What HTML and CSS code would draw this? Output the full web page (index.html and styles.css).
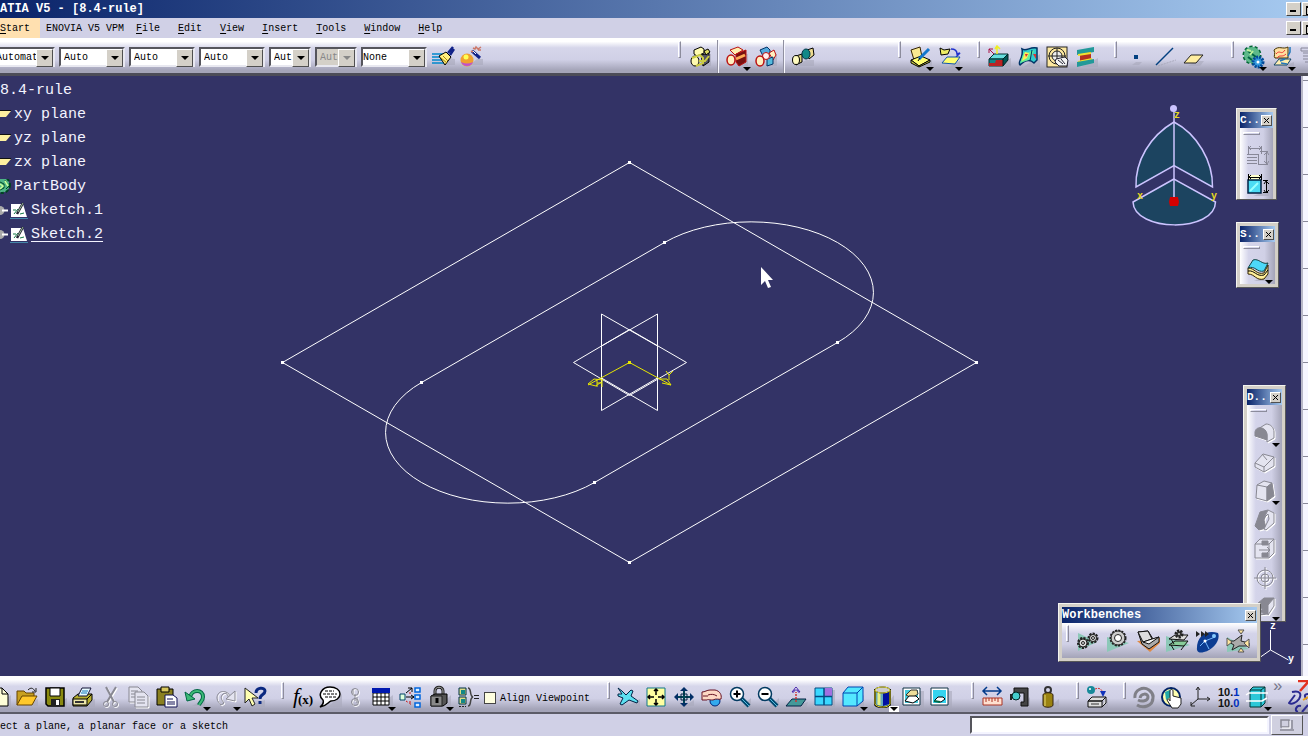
FILE: index.html
```html
<!DOCTYPE html>
<html lang="en">
<head>
<meta charset="utf-8">
<title>CATIA V5 - [8.4-rule]</title>
<link rel="stylesheet" href="styles.css">
</head>
<body>
<div class="app">
  <header class="titlebar">
    <h1>ATIA V5 - [8.4-rule]</h1>
    <div class="winbtns"><button class="min" aria-label="Minimize"></button><button class="restore" aria-label="Restore"></button></div>
  </header>

  <nav class="menubar">
    <button class="menu start"><u>S</u>tart</button>
    <button class="menu wide">ENOVIA V5 VPM</button>
    <button class="menu"><u>F</u>ile</button>
    <button class="menu"><u>E</u>dit</button>
    <button class="menu"><u>V</u>iew</button>
    <button class="menu"><u>I</u>nsert</button>
    <button class="menu"><u>T</u>ools</button>
    <button class="menu"><u>W</u>indow</button>
    <button class="menu"><u>H</u>elp</button>
    <div class="winbtns"><button class="min" aria-label="Minimize document"></button><button class="restore" aria-label="Restore document"></button></div>
  </nav>

  <div class="toolbar top">
    <div class="combos">
      <span class="combo first"><select aria-label="Fill color"><option>Automat</option></select></span>
      <span class="combo long"><select aria-label="Line color"><option>Auto</option></select></span>
      <span class="combo long"><select aria-label="Line thickness"><option>Auto</option></select></span>
      <span class="combo long"><select aria-label="Line type"><option>Auto</option></select></span>
      <span class="combo short"><select aria-label="Point symbol"><option>Aut</option></select></span>
      <span class="combo short off"><select aria-label="Rendering style" disabled><option>Aut</option></select></span>
      <span class="combo long layer"><select aria-label="Layer"><option>None</option></select></span>
    </div>
    <button class="tool" aria-label="Painter"><svg viewBox="0 0 24 24"><path class="sh" d="M12 20h12v-6l-6-1z"/><path d="M1 9h11M1 12h10M1 15h12M1 18h12" stroke="#08c" stroke-width="1.5"/><path d="M8 11l7-4 5 5-6 8z" fill="#ffef80" stroke="#000"/><path d="M10 13l6 5M12 11l5 5" stroke="#a80"/><path d="M17 8l5-6M19 10l4-6" stroke="#128" stroke-width="2.5"/></svg></button>
    <button class="tool" aria-label="Wizard"><svg viewBox="0 0 24 24"><path class="sh" d="M10 20h13v-6h-6z"/><circle cx="7" cy="15" r="6.500" fill="#f0a030"/><path d="M1 17a6.500 6.500 0 0 0 12 0c-4 2-8 2-12 0z" fill="#c050d0"/><circle cx="6" cy="12" r="2.500" fill="#ff5"/><path d="M12 6l8 7" stroke="#128" stroke-width="3"/><path d="M13 6l3 3" stroke="#fff"/><path d="M13 3l2 1 1-2 2 2 3-2M11 6l2 1M18 5l3 0" stroke="#c76" fill="none" stroke-width="1.500"/></svg></button>
    <div class="spacer"></div>

    <div class="group">
      <span class="grip"></span>
      <button class="tool" aria-label="Product"><svg viewBox="0 0 24 24"><path class="sh" d="M12 21h11V9h-4z"/><path d="M6 5l7-3 3 2v4l-7 3-3-2z" fill="#fffbb0" stroke="#000"/><path d="M13 10l8-2v9l-6 4z" fill="#556" stroke="#000"/><path d="M16 6l4-2 2 3-4 3z" fill="#dd6" stroke="#000"/><ellipse cx="7" cy="16" rx="4" ry="5" fill="#fffbb0" stroke="#000"/><path d="M4 13l8-3 3 3v5l-7 3M11 16h6l4-5" fill="none" stroke="#cc4" stroke-width="2"/></svg></button>
      <span class="line"></span>
      <button class="tool more" aria-label="Assembly"><svg viewBox="0 0 24 24"><path class="sh" d="M12 21h11V9h-4z"/><path d="M5 5l8-3 5 3-8 5z" fill="#fff0b0" stroke="#b11"/><path d="M11 9l10-4v12l-7 4-3-4z" fill="#711" stroke="#b11"/><path d="M11 14l9-4" stroke="#fa5" stroke-width="3"/><ellipse cx="6" cy="15" rx="4" ry="5" fill="#fff0c0" stroke="#b11" stroke-width="1.5"/></svg></button>
      <button class="tool" aria-label="Component"><svg viewBox="0 0 24 24"><path class="sh" d="M12 21h11V9h-4z"/><path d="M6 5l7-3 3 3v6l-6 2z" fill="#5ad" stroke="#036"/><path d="M15 8l5-3 2 5-3 5z" fill="#fff0c0" stroke="#b11"/><path d="M13 14l6-2v7l-6 2z" fill="#5bd" stroke="#036"/><circle cx="12" cy="11" r="3.500" fill="#fee" stroke="#b11"/><ellipse cx="6" cy="16" rx="4" ry="5" fill="#fff0c0" stroke="#b11" stroke-width="1.500"/></svg></button>
      <span class="line"></span>
      <button class="tool" aria-label="Join"><svg viewBox="0 0 24 24"><path class="sh" d="M6 21h17v-6h-8z"/><path d="M5 11l6-2v8l-6 3" fill="#dcd080" stroke="#000"/><ellipse cx="5" cy="15" rx="3.500" ry="4.500" fill="#fffbc0" stroke="#000"/><path d="M16 5l6-2 1 7-5 4z" fill="#eedc90" stroke="#000"/><ellipse cx="15" cy="9" rx="4" ry="5" fill="#188" stroke="#034"/></svg></button>
    </div>
    <div class="group far">
      <span class="grip"></span>
      <button class="tool more" aria-label="Sketch"><svg viewBox="0 0 24 24"><path class="sh" d="M12 23h12v-8z"/><path d="M3 5l9-3 2 10-8 3z" fill="#f8e890" stroke="#320"/><path d="M3 15l10-4 9 4-11 6z" fill="#ffff70" stroke="#000"/><path d="M3 15v3l8 4 11-5v-2l-11 6z" fill="#cc4" stroke="#000"/><path d="M11 14L21 4" stroke="#17c" stroke-width="3"/><path d="M10 16l2-3" stroke="#000"/></svg></button>
      <button class="tool more" aria-label="Positioned sketch"><svg viewBox="0 0 24 24"><path class="sh" d="M10 23h13v-7z"/><path d="M3 3l4 2 6-1-2 5-7 1z" fill="#ee6" stroke="#000"/><path d="M14 4c5 0 6 2 6 5l3-1-4 4" fill="none" stroke="#23c" stroke-width="1.500"/><path d="M5 18l5-6h13l-5 7z" fill="#ffff70" stroke="#15a"/></svg></button>
    </div>
    <div class="group near">
      <span class="grip"></span>
      <button class="tool" aria-label="Pad"><svg viewBox="0 0 24 24"><path class="sh" d="M8 22h16v-9z"/><path d="M2 14l5-5h14l-5 5z" fill="#6dd" stroke="#033"/><path d="M2 14h14v7H2z" fill="#188" stroke="#033"/><path d="M2 18h14v3H2zM9 15h10l-2 3h-9z" fill="#b22"/><path d="M16 14l5-5v6l-5 6z" fill="#055" stroke="#022"/><path d="M7 9L2 4v4M2 4h4" stroke="#a14" fill="none"/><path d="M10 9V1M8 4l2-3 3 3" stroke="#ee2" fill="none" stroke-width="1.500"/></svg></button>
      <button class="tool" aria-label="Stress"><svg viewBox="0 0 24 24"><path class="sh" d="M8 22h16V9z"/><path d="M6 4c5 3 8-3 15-1v12l-3 3c-4-4-9-3-14 2-3-2 4-8 2-16z" fill="#3cc" stroke="#036" stroke-width="1.500"/><path d="M8 7c4 3 6-2 10-1l-5 9-9 3z" fill="#6e9"/><path d="M9 7l4 1-2 5-5 3z" fill="#fe5"/><path d="M9 9l3 0-2 3zM17 9h3v5z" fill="#d33"/><path d="M16 5l-2 11" stroke="#036"/></svg></button>
      <button class="tool" aria-label="Analysis"><svg viewBox="0 0 24 24"><rect x="2" y="2" width="20" height="20" fill="#fde8a0" stroke="#222"/><circle cx="12" cy="11" r="8" fill="none" stroke="#222"/><circle cx="12" cy="11" r="5" fill="#eee" stroke="#222"/><path d="M12 3v16M3 11h18" stroke="#222"/><path d="M11 14l9-2 3 3-1 6h-8l-4-4z" fill="#f5f5f5" stroke="#223"/><path d="M13 15l5 4M16 14l4 5" stroke="#223"/></svg></button>
      <button class="tool" aria-label="Beam"><svg viewBox="0 0 24 24"><path class="sh" d="M8 22h16v-9z"/><path d="M3 5l17-3v5L3 10z" fill="#299"/><path d="M6 10l11-3v7L6 16z" fill="#b43020"/><path d="M4 10l13-2M4 17l14-3" stroke="#f0e030" stroke-width="2"/><path d="M3 17l17-3v4L3 22z" fill="#299"/></svg></button>
    </div>
    <div class="group near">
      <span class="grip"></span>
      <button class="tool" aria-label="Point"><svg viewBox="0 0 24 24"><path class="sh" d="M8 20h7l3-3h-6z"/><path d="M10 10h4v4h-4z" fill="#024080"/></svg></button>
      <button class="tool" aria-label="Line"><svg viewBox="0 0 24 24"><path d="M5 21L23 15" stroke="#aaaabc" stroke-dasharray="2 1"/><path d="M3 20L20 3" stroke="#024080" stroke-width="1.500"/></svg></button>
      <button class="tool" aria-label="Plane"><svg viewBox="0 0 24 24"><path class="sh" d="M6 21h12l4-5h-8z"/><path d="M2 18l7-8h12l-7 8z" fill="#ffeea0" stroke="#222"/></svg></button>
    </div>
    <div class="group last">
      <span class="grip"></span>
      <button class="tool more" aria-label="Part design"><svg viewBox="0 0 24 24"><circle cx="11" cy="10" r="8" fill="#3b8" stroke="#063" stroke-width="3" stroke-dasharray="3 2"/><circle cx="11" cy="10" r="8" fill="#5db98a"/><path d="M7 6l8 6M7 12l4 3" stroke="#064" stroke-width="2"/><path d="M6 5l4 1M9 10l3-4" stroke="#bff29a" stroke-width="2"/><circle cx="17" cy="17" r="5" fill="#39d" stroke="#024a9a" stroke-width="3" stroke-dasharray="2 1"/><circle cx="17" cy="17" r="1.500" fill="#fff"/></svg></button>
      <button class="tool more" aria-label="Surface design"><svg viewBox="0 0 24 24"><path class="sh" d="M12 22h12v-5z"/><path d="M4 5c5-5 9 0 14-3v11H5c-2-2 1-4-1-8z" fill="#ffe0a0" stroke="#430"/><path d="M6 9c4-5 5 2 9-4M7 13c3-4 5 0 9-4" fill="none" stroke="#e33"/><path d="M4 20l5-6h12l-4 6z" fill="#ffeeb0" stroke="#146"/><path d="M20 2v5l-2 4M10 16l5-2M11 18l6 1" stroke="#27b" stroke-width="1.500" fill="none"/></svg></button>
      <button class="tool cut" aria-label="List"><svg viewBox="0 0 24 24"><path d="M5 3h14v3H5zM7 8h12M7 11h12M7 14h12M9 17h12" fill="none" stroke="#889"/></svg></button>
    </div>
  </div>

  <main class="workspace">
    <div class="viewport">
      <svg class="drawing" viewBox="0 76 1301 600" role="img" aria-label="Sketch geometry">
        <g fill="none" stroke="#fff">
          <path d="M629.500 162.500L976.500 362.500 629.500 562.500 282.500 362.500z"/>
          <path d="M421.500 382.500L664.500 242.500A52 30 0 0 1 837.500 342.500L594.500 482.500A52 30 0 0 1 421.500 382.500z"/>
          <path d="M573.500 362.500L629.500 329.500 686.500 362.500 629.500 395.500z"/>
          <path d="M601.500 314L657.500 346V410.500L601.500 378z"/>
          <path d="M657.500 314L601.500 346V410.500L657.500 378z"/>
        </g>
        <g fill="#fff"><path d="M628 161h3v3h-3zM975 361h3v3h-3zM628 561h3v3h-3zM281 361h3v3h-3zM420 381h3v3h-3zM663 241h3v3h-3zM836 341h3v3h-3zM593 481h3v3h-3z"/></g>
        <g fill="none" stroke="#e6e600"><path d="M588 385L629.500 362.500 671 385M588 384l6-5 9 1M588 384l8 2 5-4M671 385l-4-6-8 0M671 385l-9-2M597 379v8M602 379v8M597 383h5M666 371l3 4 4-4M669 375v5"/></g>
        <path d="M628 361h3v3h-3z" fill="#e6e600"/>
        <path d="M761 267v18l4-4 3 7 3-1-3-7h5z" fill="#fff"/>
      </svg>

      <ul class="tree">
        <li class="root">8.4-rule</li>
        <li><svg class="pl" viewBox="0 0 12 16"><path d="M0 4h11L6 10H0z" fill="#fdf0a0"/><path d="M0 3.500h11" stroke="#111"/></svg>xy plane</li>
        <li><svg class="pl" viewBox="0 0 12 16"><path d="M0 4h11L6 10H0z" fill="#fdf0a0"/><path d="M0 3.500h11" stroke="#111"/></svg>yz plane</li>
        <li><svg class="pl" viewBox="0 0 12 16"><path d="M0 4h11L6 10H0z" fill="#fdf0a0"/><path d="M0 3.500h11" stroke="#111"/></svg>zx plane</li>
        <li><svg class="pl" viewBox="0 0 12 16"><circle cx="2" cy="6" r="7.500" fill="#5db98a" stroke="#042" stroke-width="3" stroke-dasharray="3 2"/><circle cx="2" cy="6" r="7" fill="#4eb488"/><path d="M0 3l4 2v4l-4 2M5 1l2 4M6 10l3-3" stroke="#042" fill="none"/><path d="M0 5l3 2-3 3M5 2l3 5" stroke="#caff9a" fill="none" stroke-width="1.500"/></svg>PartBody</li>
        <li class="sketch"><svg viewBox="0 0 28 18"><path d="M0 4a4 4 0 0 1 0 9z" fill="#aaa"/><path d="M2 8.500h6" stroke="#fff" stroke-width="2"/><path d="M11 2h12l4 13H11z" fill="#fff"/><path d="M13 8h3M14 12l4-5M20 12l4-1" stroke="#174"/><path d="M17 12l6-11" stroke="#223" stroke-width="2.500"/><path d="M18 10l5-9" stroke="#9b9"/><path d="M10 16.500h18" stroke="#48a"/></svg>Sketch.1</li>
        <li class="sketch"><svg viewBox="0 0 28 18"><path d="M0 4a4 4 0 0 1 0 9z" fill="#aaa"/><path d="M2 8.500h6" stroke="#fff" stroke-width="2"/><path d="M11 2h12l4 13H11z" fill="#fff"/><path d="M13 8h3M14 12l4-5M20 12l4-1" stroke="#174"/><path d="M17 12l6-11" stroke="#223" stroke-width="2.500"/><path d="M18 10l5-9" stroke="#9b9"/><path d="M10 16.500h18" stroke="#48a"/></svg><u>Sketch.2</u></li>
      </ul>

      <svg class="compass" viewBox="1130 102 90 126" role="img" aria-label="Compass">
        <g fill="#1c4460" stroke="#ccc4ff" stroke-width="1.500">
          <path d="M1174 122C1150 136 1135 161 1136 187L1174 165.500 1212.500 187C1213 161 1197 134 1174 122z"/>
          <path d="M1174 179L1133 202C1134 232 1215 233 1215.500 202z"/>
          <path d="M1174 109v92" fill="none"/>
        </g>
        <circle cx="1173.500" cy="108.500" r="3.500" fill="#ccc4ff"/>
        <path d="M1170 197h8l1 5-1 4h-8l-1-4z" fill="#d40000"/>
        <g fill="#e8d820" class="axis"><text x="1174" y="118">z</text><text x="1137" y="199">x</text><text x="1211" y="199">y</text></g>
      </svg>
      <svg class="triad" viewBox="1255 622 44 44" role="img" aria-label="Axes"><path d="M1270.500 630v20M1270.500 650l-10 7M1270.500 650l18 10" stroke="#fff" fill="none"/><g class="axis" fill="#fff"><text x="1270" y="629">z</text><text x="1288" y="662">y</text></g></svg>

      <section class="box c-box">
        <header><h2>C..</h2><button class="x" aria-label="Close"><svg viewBox="0 0 9 9"><path d="M2 2l5 5M7 2L2 7"/></svg></button></header>
        <div class="tools"><span class="hgrip"></span>
          <button class="tool" aria-label="Constraint defined"><svg viewBox="0 0 24 24" fill="none" stroke="#888898"><path d="M3.500 2v8M16.500 2v8M4 4.500h12M6 2l-2 2 2 2M14 2l2 2-2 2M15 7.500h8M13 20.500h10M21.500 8v12M19 11l3-3 2 3M19 17l3 3 2-3M2 10.500h12M2 13.500h10M2 16.500h10M2 19.500h10M13.500 10v11"/></svg></button>
          <button class="tool" aria-label="Constraint"><svg viewBox="0 0 24 24"><path class="sh" d="M8 23h16v-6z"/><path d="M3 2h12v5H3z" fill="#ffc"/><path d="M3 7h13v13H3z" fill="#4cdcf4" stroke="#024" stroke-width="1.500"/><path d="M5 18l8-8" stroke="#9ff" stroke-width="2"/><path d="M3.500 1v6M16.500 1v6M4 4.500h12M6 2l-2 2 2 2M14 2l2 2-2 2M18 7.500h5M18 19.500h5M21.500 8v12M19 11l2-3 3 3M19 17l2 3 3-3" fill="none" stroke="#000"/></svg></button>
        </div>
      </section>

      <section class="box s-box">
        <header><h2>S..</h2><button class="x" aria-label="Close"><svg viewBox="0 0 9 9"><path d="M2 2l5 5M7 2L2 7"/></svg></button></header>
        <div class="tools"><span class="hgrip"></span>
          <button class="tool more" aria-label="Thick surface"><svg viewBox="0 0 24 24"><path class="sh" d="M8 23h14l2-7z"/><path d="M2 10c7 0 8 7 16 5l4-8v9l-4 5c-8 2-9-5-16-5z" fill="#ffef9a" stroke="#320"/><path d="M7 2c6-2 9 5 15 3l-4 8c-7 2-9-6-16-3z" fill="#4dd8f8" stroke="#144"/><path d="M2 13c7-1 8 6 16 4l4-5" fill="none" stroke="#000"/></svg></button>
        </div>
      </section>

      <section class="box d-box">
        <header><h2>D..</h2><button class="x" aria-label="Close"><svg viewBox="0 0 9 9"><path d="M2 2l5 5M7 2L2 7"/></svg></button></header>
        <div class="tools"><span class="hgrip"></span>
          <button class="tool more" aria-label="Fillet"><svg class="dim" viewBox="0 0 24 24"><path class="w" d="M5 8l8-5c5 0 8 4 8 8v6l-7 4v-7c0-3-4-6-9-6z"/><path class="f" d="M2 11c1-7 12-5 12 3v5L2 15z"/></svg></button>
          <button class="tool" aria-label="Chamfer"><svg class="dim" viewBox="0 0 24 24"><path class="w" d="M2 13l8-9 11 3v9l-10 6-9-5z"/><path d="M2 13l9 4 10-10M11 17v5M9 4l5 6"/></svg></button>
          <button class="tool more" aria-label="Draft"><svg class="dim" viewBox="0 0 24 24"><path class="w" d="M4 6l7-4 8 2-5 4v14l-11-3z"/><path class="f" d="M14 8l5-4 2 13-7 5z"/><path d="M4 6l10 2"/></svg></button>
          <button class="tool" aria-label="Shell"><svg class="dim" viewBox="0 0 24 24"><path class="f" d="M2 18L7 4l8-2-4 10 2 8-7 2z"/><path class="w" d="M11 10l4-8 6 3v10l-8 7-2-1 5-10-1-5z"/></svg></button>
          <button class="tool" aria-label="Thickness"><svg class="dim" viewBox="0 0 24 24"><path class="w" d="M2 7l5-5h14v14l-5 5H2z"/><path d="M2 7h14v14M16 7l5-5M6 13h11M14 10l3 3-3 3"/><path class="f" d="M9 4h6v4H9zM9 16h6v4H9z"/></svg></button>
          <button class="tool" aria-label="Thread"><svg class="dim" viewBox="0 0 24 24"><circle cx="12" cy="12" r="8"/><circle cx="12" cy="12" r="4"/><path d="M12 1v22M1 12h22"/></svg></button>
          <button class="tool more" aria-label="Remove face"><svg class="dim" viewBox="0 0 24 24"><path class="f" d="M4 9l7-6h10l-6 7v9l-9 1z"/><path class="w" d="M15 10l6-7v8l-6 9zM4 12l7 2-5 2 6 3H3z"/></svg></button>
        </div>
      </section>

      <section class="box w-box">
        <header><h2>Workbenches</h2><button class="x" aria-label="Close"><svg viewBox="0 0 9 9"><path d="M2 2l5 5M7 2L2 7"/></svg></button></header>
        <div class="tools row"><span class="grip"></span>
          <button class="tool" aria-label="Assembly design"><svg viewBox="0 0 24 24"><path class="bench" d="M2 4v18l19-9z"/><g class="gear"><circle cx="7" cy="14" r="4.500"/><circle cx="17" cy="9" r="4"/></g><circle cx="7" cy="14" r="4" class="hub"/><circle cx="17" cy="9" r="3.500" class="hub"/><circle cx="7" cy="14" r="1.500" class="hub"/><circle cx="17" cy="9" r="1.500" class="hub"/></svg></button>
          <button class="tool" aria-label="Part design"><svg viewBox="0 0 24 24"><path class="bench" d="M1 8v15l22-9z"/><g class="gear"><circle cx="12" cy="9" r="7"/></g><circle cx="12" cy="9" r="7" fill="#ccc" stroke="#222"/><circle cx="12" cy="9" r="3.500" fill="#fff" stroke="#222"/></svg></button>
          <button class="tool" aria-label="Shape design"><svg viewBox="0 0 24 24"><path d="M1 12l13 11 10-9V9l-9 2z" fill="#e08a45"/><path d="M2 3l10-1 5 8 6-2v5l-10 7L6 15z" fill="#aaa" stroke="#111"/><path d="M2 3l10-1 4 8-9 3z" fill="#ddd" stroke="#111"/><path d="M7 13l9-3 7-2-10 7z" fill="#f4f4f4" stroke="#111"/></svg></button>
          <button class="tool" aria-label="Product structure"><svg viewBox="0 0 24 24"><path class="bench" d="M0 7v16l24-7z"/><path d="M3 10l6-4h13l-4 5z" fill="#ddd" stroke="#111"/><path d="M3 16l6-4h13l-4 5z" fill="#8c9" stroke="#111"/><path d="M5 16l3 5M18 17l-3 4M5 10l3 5" stroke="#111"/><g class="gear"><circle cx="13" cy="5" r="3"/></g><circle cx="13" cy="5" r="1.500" class="hub"/></svg></button>
          <button class="tool" aria-label="Kinematics"><svg viewBox="0 0 24 24"><path d="M1 21C0 8 10 0 22 4c3 7-5 17-14 19-3 1-6 1-7-2z" fill="#0c3c92"/><path d="M9 12l10-4M9 12l4 8M9 12l-5 5" stroke="#7bf"/><circle cx="9" cy="12" r="1.500" fill="#fff"/><path d="M0 2l4 3-4 3zM5 2l4 3-4 3zM9 2l4 3-4 3z" fill="#222"/><circle cx="18" cy="7" r="2" fill="#8cf"/></svg></button>
          <button class="tool" aria-label="Drafting"><svg viewBox="0 0 24 24"><path class="bench" d="M1 8v15l22-3z"/><path d="M1 12h7l8-6-1 6 8 2v3H13l-7 4 2-5z" fill="#aaa" stroke="#222"/><path d="M12 1h6l-3 4zM1 9l5 4-5 4zM23 10l-5 4 5 5zM12 23h6l-3-4z" fill="#ffe5a0" stroke="#555"/></svg></button>
        </div>
      </section>
    </div>
    <aside class="edge"></aside>
  </main>

  <div class="toolbar bottom">
    <button class="tool cut" aria-label="New"><svg viewBox="0 0 24 24"><path class="sh" d="M8 22h14V10z"/><path d="M4 3h9l6 6v12H4z" fill="#ffffd8" stroke="#000"/><path d="M13 3v6h6" fill="none" stroke="#000"/></svg></button>
    <button class="tool" aria-label="Open"><svg viewBox="0 0 24 24"><path class="sh" d="M6 21h17v-7z"/><path d="M2 20V6h7l2 2h8v4" fill="#c8a020" stroke="#640"/><path d="M2 20l5-9h15l-5 9z" fill="#ffc82a" stroke="#640"/><path d="M13 5c3-3 5-2 7 1M21 3v4h-4" fill="none" stroke="#222"/></svg></button>
    <button class="tool" aria-label="Save"><svg viewBox="0 0 24 24"><path class="sh" d="M6 22h18v-9z"/><path d="M3 3h18v18H5l-2-2z" fill="#8a8a10" stroke="#000" stroke-width="1.500"/><path d="M7 3h10v8H7z" fill="#fff" stroke="#000"/><path d="M8 14h9v7H8z" fill="#222"/><path d="M13 15h3v5h-3z" fill="#fff"/></svg></button>
    <button class="tool" aria-label="Print"><svg viewBox="0 0 24 24"><path class="sh" d="M8 22h16v-8z"/><path d="M2 13l5-4h14v6l-5 6H2z" fill="#b8b030" stroke="#000"/><path d="M7 11l4-8h9l-4 8z" fill="#e8faff" stroke="#113"/><path d="M11 6h6M10 8h6" stroke="#17b"/><path d="M2 14h14v6H2zM16 14l5-5" fill="#eee8a8" stroke="#000"/><path d="M4 17h9" stroke="#333" stroke-width="2"/></svg></button>
    <button class="tool" aria-label="Cut"><svg class="dim" viewBox="0 0 24 24"><path d="M7 2l8 15M17 2L8 17" stroke-width="2"/><circle cx="7" cy="19" r="2.500"/><circle cx="16" cy="19" r="2.500"/></svg></button>
    <button class="tool" aria-label="Copy"><svg class="dim" viewBox="0 0 24 24"><path class="w" d="M2 2h9l4 4v11H2z"/><path class="w" d="M8 7h9l4 4v11H8z"/><path d="M4 6h7M4 9h4M4 12h4M10 12h8M10 15h8M10 18h8"/></svg></button>
    <button class="tool" aria-label="Paste"><svg viewBox="0 0 24 24"><path d="M2 4h16v16H2z" fill="#8a8020" stroke="#000"/><path d="M6 2h8v5H6z" fill="#d8c860" stroke="#000"/><path d="M10 10h8l4 3v9H10z" fill="#fff" stroke="#115"/><path d="M12 14h6M12 17h8M12 19h8" stroke="#115"/></svg></button>
    <button class="tool more" aria-label="Undo"><svg viewBox="0 0 24 24"><path class="sh" d="M8 21h13v-7z"/><path d="M6 12c2-8 13-8 13 0 0 4-3 5-4 8" fill="none" stroke="#064" stroke-width="4"/><path d="M6 12c2-8 13-8 13 0 0 4-3 5-4 8" fill="none" stroke="#3dba78" stroke-width="2"/><path d="M1 7l2 9 8-2z" fill="#3dba78" stroke="#064"/></svg></button>
    <button class="tool more" aria-label="Redo"><svg class="dim" viewBox="0 0 24 24"><path d="M17 12C13 4 3 5 3 13c0 4 3 5 4 7l3-2c-3-4-4-6-1-9 3-2 6 1 5 5z"/><path class="w" d="M21 6v10l-9-2z"/></svg></button>
    <button class="tool" aria-label="What's this"><svg viewBox="0 0 24 24"><path class="sh" d="M6 22h16v-7z"/><path d="M2 3v15l4-4 3 7 3-2-3-6h6z" fill="#ffffb0" stroke="#222"/><path d="M13 8c0-6 9-6 9-2 0 4-5 3-5 8M17 16v3" fill="none" stroke="#0a2880" stroke-width="3"/></svg></button>
    <div class="group first-g">
      <span class="grip"></span>
      <button class="tool" aria-label="Formula"><svg viewBox="0 0 24 24"><text x="3" y="18" class="fx">f</text><text x="8" y="19" class="fxs">(x)</text></svg></button>
      <button class="tool" aria-label="Comment"><svg viewBox="0 0 24 24"><path class="sh" d="M10 22h14V9z"/><path d="M12 2c6 0 10 3 10 7s-4 7-9 7c-3 1-4 5-11 6 3-2 4-4 3-7-6-5-1-13 7-13z" fill="#fff" stroke="#000" stroke-width="1.500"/><path d="M7 6h9M5 9h14M7 12h11" stroke="#000" stroke-dasharray="3 1"/></svg></button>
      <button class="tool narrow" aria-label="Link"><svg class="dim" viewBox="0 0 24 24"><circle cx="12" cy="7" r="3.500"/><circle cx="12" cy="17" r="3.500"/><path d="M10 4v5M12 9v7M14 12v6"/></svg></button>
      <button class="tool more" aria-label="Design table"><svg viewBox="0 0 24 24"><path class="sh" d="M8 22h16V10z"/><path d="M4 8h16v12H4z" fill="#fff" stroke="#000"/><path d="M4 12h16M4 16h16M8 8v12M12 8v12M16 8v12" stroke="#000"/><path d="M3 3h18v5H3z" fill="#0018b0"/></svg></button>
      <button class="tool" aria-label="Relations"><svg viewBox="0 0 24 24"><path d="M2 9h5v6H2z" fill="#dfd" stroke="#046"/><path d="M17 3h5v4h-5zM17 10h5v4h-5zM17 18h5v4h-5z" fill="#def" stroke="#06d" stroke-width="1.500"/><path d="M8 12h8M13 10l3 2-3 2M8 8l6-5M10 3h4v4" fill="none" stroke="#000"/><path d="M8 16l6 4M11 8h3M11 17h3" stroke="#c11" stroke-dasharray="2 2"/></svg></button>
      <button class="tool more" aria-label="Lock"><svg viewBox="0 0 24 24"><path class="sh" d="M12 22h12V10z"/><path d="M8 11V6c0-5 8-5 8 0v7" fill="none" stroke="#222" stroke-width="3"/><path d="M8 11V6c0-5 8-5 8 0v7" fill="none" stroke="#aaa"/><path d="M4 11l4-2h12v9l-4 3H4z" fill="#555" stroke="#000"/><path d="M4 11h11v10H4z" fill="#888" stroke="#222"/><path d="M10 13v5" stroke="#000" stroke-width="3"/></svg></button>
      <button class="tool" aria-label="Equivalent dimensions"><svg viewBox="0 0 24 24"><path d="M3 3h7v7H3zM3 12h7v7H3z" fill="#dd8" stroke="#034"/><path d="M5 5h4v4H5zM5 14h4v4H5z" fill="#188"/><path d="M12 3c4 0 1 8 5 9-4 1-1 9-5 9" fill="none" stroke="#444" stroke-width="1.500"/><path d="M18 10.500h5M18 13.500h5" stroke="#222"/><path d="M3 21.500h7" stroke="#222" stroke-dasharray="2 1"/></svg></button>
      <label class="align"><input type="checkbox">Align Viewpoint</label>
    </div>
    <div class="group view">
      <span class="grip"></span>
      <button class="tool" aria-label="Fly"><svg viewBox="0 0 24 24"><path class="sh" d="M10 22h14v-8z"/><path d="M2 3l4 3 4 4 5-5 2 1-2 5 7 5-1 2-8-3-7 5-2-1 3-6-5-2v-2h4z" fill="#5ce0f0" stroke="#024"/></svg></button>
      <button class="tool" aria-label="Fit all"><svg viewBox="0 0 24 24"><path d="M3 3h18v18H3z" fill="#ffffa0" stroke="#178"/><path d="M12 4v6M12 14v6M4 12h6M14 12h6M10 6l2-2 2 2M10 18l2 2 2-2M6 10l-2 2 2 2M18 10l2 2-2 2" fill="none" stroke="#000" stroke-width="1.500"/></svg></button>
      <button class="tool" aria-label="Pan"><svg viewBox="0 0 24 24"><path class="sh" d="M13 21h9v-6z"/><path d="M12 3v18M3 12h18" stroke="#045" stroke-width="2"/><path d="M12 2l4 4H8zM12 22l4-4H8zM2 12l4-4v8zM22 12l-4-4v8z" fill="#022e66"/><path d="M9 9h6v6H9z" fill="none" stroke="#024"/></svg></button>
      <button class="tool" aria-label="Rotate"><svg viewBox="0 0 24 24"><circle cx="15" cy="16" r="5" fill="#3ae" stroke="#027"/><path d="M2 7c3 0 5-2 8-2h5c5 1 7 5 6 9-2 1-5-1-8 1-4 0-5-1-6 0H2z" fill="#fdd8c4" stroke="#612"/><path d="M8 10c3-1 6-1 9 1M3 11h5" fill="none" stroke="#612"/></svg></button>
      <button class="tool" aria-label="Zoom in"><svg viewBox="0 0 24 24"><path class="sh" d="M14 22h9v-9z"/><path d="M13 13l8 8" stroke="#024a70" stroke-width="4"/><path d="M14 14l7 7" stroke="#5bd"/><circle cx="9" cy="9" r="6.500" fill="#fff" stroke="#023a60" stroke-width="1.500"/><path d="M5.500 9h7M9 5.500v7" stroke="#000" stroke-width="2"/></svg></button>
      <button class="tool" aria-label="Zoom out"><svg viewBox="0 0 24 24"><path class="sh" d="M14 22h9v-9z"/><path d="M13 13l8 8" stroke="#024a70" stroke-width="4"/><path d="M14 14l7 7" stroke="#5bd"/><circle cx="9" cy="9" r="6.500" fill="#fff" stroke="#023a60" stroke-width="1.500"/><path d="M5.500 9h7" stroke="#000" stroke-width="2"/></svg></button>
      <button class="tool" aria-label="Normal view"><svg viewBox="0 0 24 24"><path class="sh" d="M6 23h16l2-6z"/><path d="M2 21l6-7h14l-5 7z" fill="#499" stroke="#024"/><path d="M12 17V7" stroke="#c33" stroke-dasharray="2 1" stroke-width="1.500"/><path d="M8 7l4-5 4 5h-2v-2h-4v2z" fill="#fff" stroke="#42a"/></svg></button>
      <button class="tool" aria-label="Multi-view"><svg viewBox="0 0 24 24"><path class="sh" d="M5 5h18v17H5z"/><path d="M3 3h17v17H3z" fill="#3ad8ff" stroke="#024a80"/><path d="M12 3h8v8h-8z" fill="#a070e0"/><path d="M12 3v17M3 11.500h17" stroke="#024a80" stroke-width="1.500"/></svg></button>
      <button class="tool more" aria-label="Isometric view"><svg viewBox="0 0 24 24"><path class="sh" d="M8 22h15V10z"/><path d="M2 8l5-6h15v14l-6 5H2z" fill="#54e8ff" stroke="#0045b0"/><path d="M2 8h14v13M16 8l6-6" fill="none" stroke="#0045b0"/></svg></button>
      <button class="tool more lit" aria-label="Shading"><svg viewBox="0 0 24 24"><path class="sh" d="M14 22h9V10z"/><path d="M4 5v14c0 4 15 4 15 0V5z" fill="#6ab" stroke="#000" stroke-width="2"/><path d="M12 7v14l6-2V6z" fill="#0010a0"/><path d="M8 8v12" stroke="#e8f080" stroke-width="3"/><ellipse cx="11.500" cy="5" rx="7.500" ry="3" fill="#ccc" stroke="#000"/><path d="M4 5v14c1 4 14 4 15 0V5c-1-4-14-4-15 0c1 4 14 4 15 0" fill="none" stroke="#e0d830"/></svg></button>
      <button class="tool" aria-label="Hide/Show"><svg viewBox="0 0 24 24"><path class="sh" d="M6 6h18v17H6z"/><path d="M3 3h17v17H3z" fill="#fff" stroke="#134"/><path d="M5 5h13v13H5z" fill="#4cd"/><path d="M6 10l5-5h6l1 4-6 4z" fill="#ed9" stroke="#333"/><path d="M5 16l4-5h7l3 3-6 4z" fill="#fff" stroke="#000"/></svg></button>
      <button class="tool" aria-label="Swap visible space"><svg viewBox="0 0 24 24"><path class="sh" d="M6 6h18v17H6z"/><path d="M3 3h17v17H3z" fill="#fff" stroke="#134"/><path d="M5 5h13v13H5z" fill="#35d4f0"/><path d="M6 16l4-4h5l2 2-4 3z" fill="#fff" stroke="#000"/><path d="M6 16l6 1" stroke="#064" stroke-width="2"/></svg></button>
    </div>
    <div class="group measure">
      <span class="grip"></span>
      <button class="tool" aria-label="Measure between"><svg viewBox="0 0 24 24"><path d="M3 6h18M7 2L3 6l4 4M17 2l4 4-4 4" fill="none" stroke="#013a8a" stroke-width="1.500"/><path d="M3 13h19v7H3z" fill="#ffe0d0" stroke="#a32"/><path d="M6 13v4M9 13v3M12 13v4M15 13v3M18 13v4" stroke="#a32"/></svg></button>
      <button class="tool" aria-label="Measure item"><svg viewBox="0 0 24 24"><path class="sh" d="M14 22h8V12z"/><path d="M6 3h14v18h-7v-4h3V8H6z" fill="#444" stroke="#111"/><circle cx="8" cy="11" r="4" fill="#4cc" stroke="#022"/><path d="M3 9v6" stroke="#222" stroke-width="2"/></svg></button>
      <button class="tool" aria-label="Measure inertia"><svg viewBox="0 0 24 24"><path class="sh" d="M14 22h9V14z"/><circle cx="12" cy="5" r="3" fill="none" stroke="#333" stroke-width="2"/><path d="M7 10c0-3 10-3 10 0v10c0 3-10 3-10 0z" fill="#9a8210" stroke="#321"/><path d="M9 10v11" stroke="#e8d870"/></svg></button>
    </div>
    <div class="group near">
      <span class="grip"></span>
      <button class="tool" aria-label="Catalog"><svg viewBox="0 0 24 24"><path class="sh" d="M8 23h15v-9z"/><circle cx="6" cy="5" r="4" fill="#178a9a"/><circle cx="5" cy="4" r="1" fill="#fff"/><path d="M10 4c5-2 8 1 8 6" fill="none" stroke="#c33" stroke-dasharray="2 1"/><path d="M15 6h6l-3 6z" fill="#13b"/><path d="M3 16l4-4h14l-4 4zM3 16h14v6H3zM17 22l4-4v-6" fill="#ddd" stroke="#111"/><path d="M6 19h8" stroke="#333"/></svg></button>
    </div>
    <div class="group render">
      <span class="grip"></span>
      <button class="tool" aria-label="Update"><svg viewBox="0 0 24 24" fill="none" stroke="#808088" stroke-width="3"><path d="M3 13C2 5 11 1 17 5c4 3 5 7 3 11M21 13c0 8-10 11-16 7M8 13c1-5 8-5 8-1s-6 5-10 3"/></svg></button>
      <button class="tool" aria-label="Select"><svg viewBox="0 0 24 24"><circle cx="11" cy="12" r="9" fill="#ffffb0" stroke="#026" stroke-width="2"/><path d="M5 7l7-3v7l-6 4z" fill="#2aa"/><path d="M10 14V6c0-2 3-2 3 0v5l8 2v6l-3 4h-6l-5-8c1-2 2-1 3 1z" fill="#fff" stroke="#222"/></svg></button>
      <button class="tool" aria-label="Axis system"><svg viewBox="0 0 24 24"><path d="M10 14V3M10 14h11M10 14l-7 6M8 5l2-3 2 3M19 12l3 2-3 2M3 17v4h4" fill="none" stroke="#222"/></svg></button>
      <button class="tool" aria-label="Mean dimensions"><svg viewBox="0 0 24 24"><text class="num" x="2" y="11">10.<tspan>1</tspan></text><text class="num" x="2" y="22">10.<tspan>0</tspan></text></svg></button>
      <button class="tool more" aria-label="Sectioning"><svg viewBox="0 0 24 24"><path class="sh" d="M14 22h9V10z"/><path d="M5 5l3-3h12v16l-4 4H5z" fill="#2cc8d8" stroke="#033"/><path d="M5 5h11v17M16 5l4-3" fill="none" stroke="#033"/><path d="M1 10l3-2h19M1 16h16l5-3" fill="none" stroke="#fff" stroke-width="1.500"/></svg></button>
    </div>
    <span class="chev">»</span>
    <svg class="logo" viewBox="0 0 20 34"><path d="M10 1h10M12 11l8-9" stroke="#e33020" stroke-width="2.500" fill="none"/><path d="M4 12c8-2 10 2 7 7-2 3-7 6-10 4l6-8M20 14c-4 0-4 3-1 5" fill="none" stroke="#2a2a90" stroke-width="2"/><path d="M13 26c-5-1-7 5-3 6M14 32l6-7" fill="none" stroke="#2a2a90" stroke-width="2"/><path d="M15 20l5-3" stroke="#e8a020" stroke-width="2"/></svg>
  </div>

  <footer class="status">
    <p>ect a plane, a planar face or a sketch</p>
    <input type="text" aria-label="Power input">
    <button class="power" aria-label="Command window"><svg viewBox="0 0 18 14"><path d="M3 2h8v7H3zM14 2v9M2 12h14" fill="none" stroke="#888894" stroke-width="1.500"/><path d="M4 10h8V3" fill="none" stroke="#fff"/></svg></button>
  </footer>
</div>
</body>
</html>
```
FILE: styles.css
```css
* { box-sizing: border-box; }
body { margin: 0; overflow: hidden; font-family: "Liberation Mono", monospace; font-size: 10px; color: #000; background: #d0d0e6; }
button { font: inherit; color: inherit; border: 0; margin: 0; padding: 0; background: none; }
h1, h2, p, ul { margin: 0; padding: 0; }
.app { display: flex; flex-direction: column; height: 100vh; overflow: hidden; }

/* Title and menu */
.titlebar { display: flex; align-items: center; flex: 0 0 18px; background: linear-gradient(90deg, #0a246a, #a6caf0); }
.titlebar h1 { font-size: 12px; line-height: 18px; color: #fff; }
.winbtns { display: flex; gap: 1px; width: 22px; margin-left: auto; overflow: hidden; }
.winbtns button { flex: 0 0 15px; height: 14px; background: #d4d0c8; border: 1px solid; border-color: #fff #404040 #404040 #fff; padding: 3px; }
.min::after { content: ""; display: block; width: 6px; height: 2px; margin-top: 4px; background: #000; }
.restore::after { content: ""; display: block; width: 7px; height: 6px; border: 1px solid #000; border-top-width: 2px; }
.menubar { display: flex; align-items: center; flex: 0 0 20px; background: #d0d0e6; }
.menu { height: 20px; padding: 1px 9px 0; line-height: 19px; white-space: nowrap; }
.menu.start { width: 40px; padding: 1px 0 0; text-align: left; background: #ffe0b0; }
.menu.wide { padding: 1px 3px 0 6px; }
.menu u { text-underline-offset: 2px; }

/* Toolbars */
.toolbar { display: flex; align-items: center; flex: 0 0 38px; overflow: hidden; background: linear-gradient(180deg, #fff 0, #fff 10%, #d6d6ea 28%, #d0d0e6 62%, #a4a4b8 92%); }
.toolbar.top { border-bottom: 3px solid #4c4c58; padding-top: 2px; }
.toolbar.bottom { border-bottom: 2px solid #5c5c68; padding-top: 6px; }
.spacer { flex: 1 1 0; }
.group { display: flex; align-items: center; flex: none; }
.group.near { margin-left: 14px; }
.group.far { margin-left: 81px; }
.group.last { margin-left: 23px; }
.group.first-g { margin-left: 12px; }
.group.view, .group.measure { margin-left: 17px; }
.group.render { margin-left: 12px; }
.grip { flex: none; width: 3px; height: 17px; margin-right: 4px; margin-bottom: 14px; border: 1px solid; border-color: #fff #8c8c9c #8c8c9c #fff; background: #d0d0e6; }
.line { width: 2px; height: 34px; margin: 0 3px; background: #f8f8ff; border-left: 1px solid #9090a0; }
.tool { position: relative; display: flex; align-items: center; justify-content: center; flex: none; width: 29px; height: 26px; }
.tool svg { flex: none; width: 24px; height: 24px; }
.bottom .tool { width: 28px; }
.bottom .tool.more { width: 30px; }
.bottom .tool.narrow { width: 22px; }
.top .tool.cut { width: 12px; overflow: hidden; justify-content: flex-start; }
.bottom .tool.cut { width: 13px; overflow: hidden; justify-content: flex-end; }
.more::after { content: ""; position: absolute; right: 0; bottom: -1px; border: 4px solid transparent; border-top-color: #000; border-bottom: 0; }
.more.lit::before { content: ""; position: absolute; right: -1px; bottom: -2px; width: 10px; height: 6px; background: #fff; }
.sh { fill: #a8a8ba; opacity: .6; }

.combos { display: flex; gap: 4px; padding-right: 1px; }
.combo { position: relative; display: block; height: 20px; }
.combo.first { width: 61px; margin-left: -6px; }
.combo.long { width: 66px; }
.combo.short { width: 42px; }
.combo select { appearance: none; display: block; width: 100%; height: 20px; margin: 0; padding: 1px 15px 0 3px; border: 2px solid; border-color: #55555c #e8e8f0 #e8e8f0 #55555c; border-radius: 0; background: #fff; color: #000; font: inherit; opacity: 1; }
.combo.first select, .combo.layer select { padding-left: 0; }
.combo::before { content: ""; position: absolute; right: 2px; top: 2px; width: 15px; height: 16px; background: #d4d0c8; border: 1px solid; border-color: #fff #505050 #505050 #fff; pointer-events: none; }
.combo::after { content: ""; position: absolute; right: 6px; top: 9px; border: 4px solid transparent; border-top-color: #000; border-bottom: 0; pointer-events: none; }
.combo.off select { background: #d4d0c8; color: #888; }
.combo.off::after { border-top-color: #888; }

.align { display: flex; align-items: center; gap: 4px; margin: 2px 0 0 2px; white-space: nowrap; }
.align input { appearance: none; width: 12px; height: 12px; margin: 0; border: 1px solid #444; background: #ffffe0; }
.chev { margin: 0 0 20px 1px; font-size: 16px; line-height: 12px; color: #777788; }
.logo { flex: none; width: 20px; height: 34px; margin-left: auto; }
.fx { font: italic 22px "Liberation Serif", serif; }
.fxs { font: bold 13px "Liberation Serif", serif; }
.num { font: bold 11px "Liberation Sans", sans-serif; fill: #111; }
.num tspan { fill: #0030c0; }

/* Work area */
.workspace { display: flex; flex: 1 1 0; min-height: 0; }
.viewport { position: relative; flex: 1 1 0; overflow: hidden; background: #333366; }
.drawing { position: absolute; inset: 0; width: 100%; height: 100%; }
.edge { flex: 0 0 7px; border-left: 2px solid #b8b8c8; background: repeating-linear-gradient(180deg, #f6f6ff 0, #f6f6ff 4px, #888898 4px, #888898 5px, #f6f6ff 5px, #f6f6ff 47px); }
.tree { position: relative; list-style: none; padding-top: 3px; font-size: 15px; line-height: 24px; color: #f4f4ff; }
.tree li { display: flex; align-items: center; gap: 2px; height: 24px; }
.tree .pl { width: 12px; height: 16px; }
.tree .sketch { gap: 3px; }
.tree .sketch svg { width: 28px; height: 18px; }
.tree u { text-underline-offset: 3px; }
.compass { position: absolute; right: 81px; top: 26px; width: 90px; height: 126px; }
.triad { position: absolute; right: 2px; bottom: 10px; width: 44px; height: 44px; }
.axis { font: bold 10px "Liberation Mono", monospace; }

/* Floating toolboxes */
.box { position: absolute; display: flex; flex-direction: column; padding: 3px; background: #d4d0c8; border: 1px solid; border-color: #f4f4f0 #585858 #585858 #f4f4f0; }
.box header { display: flex; align-items: center; flex: 0 0 16px; padding-right: 1px; background: linear-gradient(90deg, #0a246a, #a6caf0); }
.box h2 { flex: 1; font-size: 11px; line-height: 16px; color: #fff; }
.w-box h2 { font-size: 12px; }
.x { display: flex; flex: none; width: 11px; height: 11px; background: #d4d0c8; border: 1px solid; border-color: #fff #505050 #505050 #fff; }
.x svg { width: 9px; height: 9px; stroke: #000; }
.tools { display: flex; flex-direction: column; align-items: center; flex: 1; background: linear-gradient(90deg, #fff, #d4d4ea 25%, #d0d0e6 70%, #a4a4b8); }
.tools.row { flex-direction: row; padding-left: 4px; background: linear-gradient(180deg, #fff, #d4d4ea 30%, #d0d0e6 60%, #a4a4b8); }
.hgrip { align-self: flex-start; width: 17px; height: 3px; margin: 4px 0 6px 3px; border: 1px solid; border-color: #fff #8c8c9c #8c8c9c #fff; }
.tools .tool { height: 29px; }
.tools.row .tool { width: 30px; }
.tools .more::after { right: -1px; bottom: 0; }
.c-box { right: 24px; top: 32px; width: 41px; height: 92px; }
.s-box { right: 22px; top: 146px; width: 43px; height: 66px; }
.d-box { right: 15px; top: 309px; width: 43px; height: 237px; }
.w-box { right: 40px; top: 527px; width: 203px; height: 59px; }
.dim { fill: none; stroke: #888892; stroke-width: 1; filter: drop-shadow(1px 1px 0 #fff); }
.dim .f { fill: #888892; }
.dim .w { fill: #e4e4f0; }
.bench { fill: #8cc8b8; }
.gear { fill: #555; stroke: #222; stroke-width: 3; stroke-dasharray: 2 1; }
.hub { fill: #ddd; stroke: #222; }

/* Status line */
.status { display: flex; align-items: center; flex: 0 0 22px; gap: 2px; background: #d0d0e6; padding-right: 5px; }
.status p { flex: 1; padding-top: 3px; line-height: 16px; }
.status input { width: 299px; height: 18px; border: 2px solid; border-color: #55555c #f4f4ff #f4f4ff #55555c; background: #fff; font: inherit; }
.power { display: flex; align-items: center; justify-content: center; width: 32px; height: 20px; border: 1px solid; border-color: #fff #555 #555 #fff; background: #d0d0e0; }
.power svg { width: 18px; height: 14px; }
```
